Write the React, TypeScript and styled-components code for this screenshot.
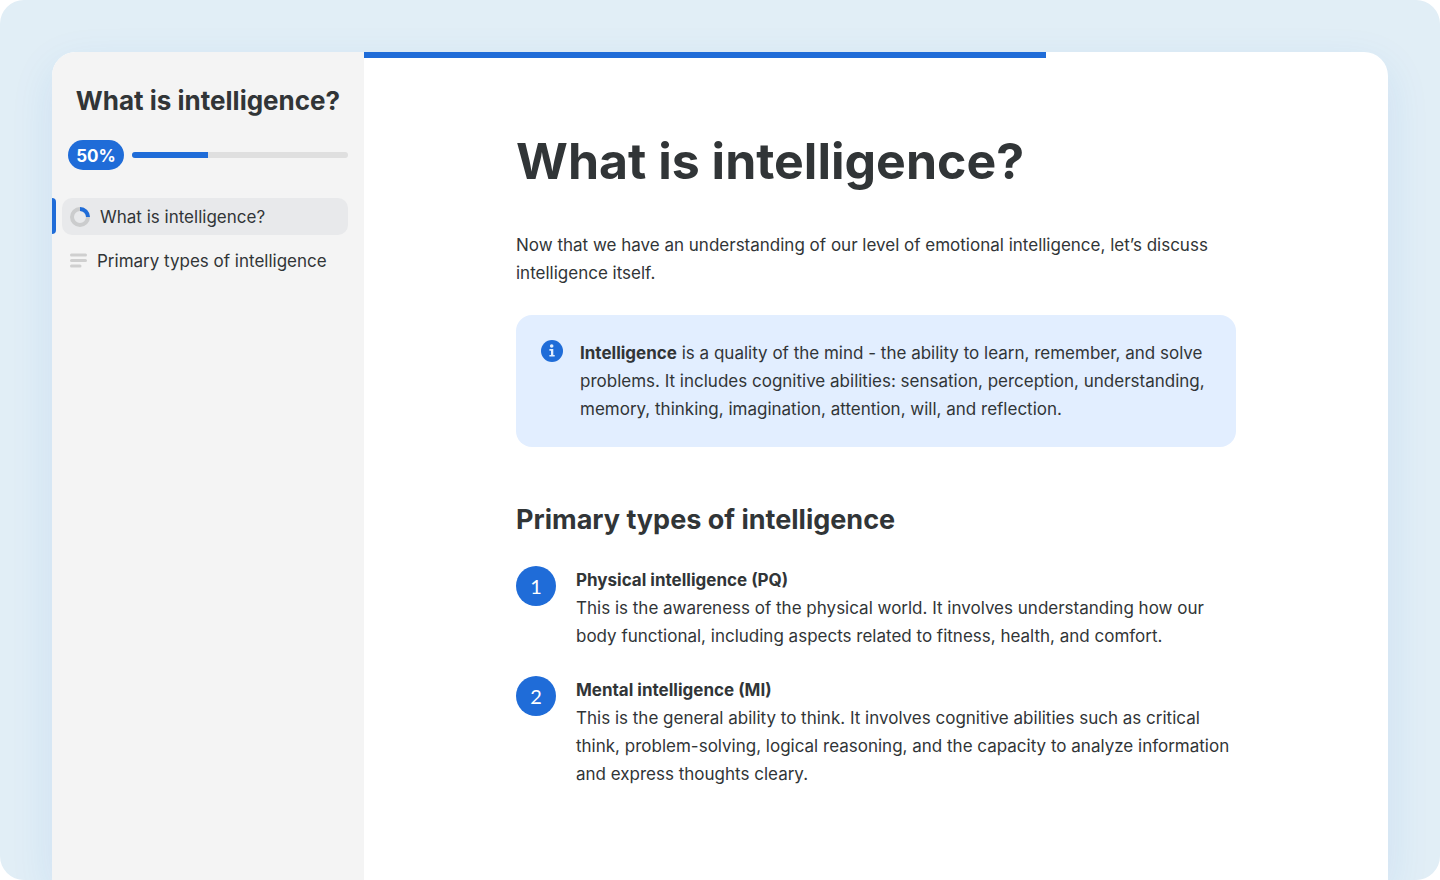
import React from "react";
import styled, { createGlobalStyle } from "styled-components";

const blue = "#1f6cd8";
const ink = "#313537";

const GlobalStyle = createGlobalStyle`
  *, *::before, *::after { box-sizing: border-box; }
  body { margin: 0; background: #fff; color: ${ink}; font: 400 17px/28px Inter, sans-serif; }
  h1, h2, h3, p, ul, ol { margin: 0; padding: 0; }
  ul, ol { list-style: none; }
`;

const Page = styled.div`
  display: flex;
  min-height: 100vh;
  padding: 52px 52px 0;
  overflow: hidden;
  border-radius: 24px;
  background: #e1eef6;
`;

const Course = styled.div`
  display: flex;
  flex: 1;
  min-width: 0;
  border-radius: 24px 24px 0 0;
  background: #fff;
  box-shadow: 0 14px 44px rgba(31, 108, 216, 0.1);
`;

const Sidebar = styled.aside`
  flex: 0 0 312px;
  padding: 32px 16px;
  border-radius: 24px 0 0 0;
  background: #f4f4f4;
`;

const SidebarTitle = styled.h2`
  font-size: 26px;
  line-height: 34px;
  font-weight: 700;
  text-align: center;
  white-space: nowrap;
`;

const Progress = styled.div`
  display: flex;
  align-items: center;
  gap: 8px;
  margin-top: 22px;
`;

const Percent = styled.span`
  width: 56px;
  height: 30px;
  border-radius: 15px;
  background: ${blue};
  color: #fff;
  font-size: 17px;
  line-height: 32px;
  font-weight: 700;
  text-align: center;
`;

const Track = styled.div`
  flex: 1;
  height: 6px;
  overflow: hidden;
  border-radius: 3px;
  background: #dfdfdf;
`;

const Bar = styled.div`
  height: 100%;
  background: ${blue};
`;

const Lessons = styled.ul`
  display: flex;
  flex-direction: column;
  gap: 7px;
  margin: 28px 0 0 -16px;
`;

const Lesson = styled.li<{ $active?: boolean }>`
  display: flex;
  gap: 6px;

  &::before {
    content: "";
    width: 4px;
    height: 36px;
    border-radius: 0 4px 4px 0;
    background: ${(p) => (p.$active ? blue : "transparent")};
  }
`;

const LessonLink = styled.a<{ $active?: boolean }>`
  display: flex;
  flex: 1;
  align-items: center;
  gap: 10px;
  height: 37px;
  padding: 0 8px;
  border-radius: 10px;
  background: ${(p) => (p.$active ? "#e8e9eb" : "transparent")};
  color: inherit;
  text-decoration: none;
  white-space: nowrap;
`;

const Main = styled.main`
  flex: 1;
  min-width: 0;
`;

const ReadingTrack = styled.div`
  height: 6px;
`;

const Article = styled.article`
  max-width: 752px;
  margin: 0 auto;
  padding: 70px 16px 64px;
`;

const Title = styled.h1`
  font-size: 50px;
  line-height: 66px;
  font-weight: 700;
`;

const Intro = styled.p`
  margin-top: 37px;
`;

const Callout = styled.section`
  display: flex;
  gap: 16px;
  margin-top: 28px;
  padding: 24px;
  border-radius: 16px;
  background: #e2eeff;

  svg { flex: none; }
`;

const Subtitle = styled.h2`
  margin-top: 55px;
  font-size: 27px;
  line-height: 36px;
  font-weight: 700;
`;

const Types = styled.ol`
  display: flex;
  flex-direction: column;
  gap: 26px;
  margin-top: 28px;
`;

const TypeItem = styled.li`
  display: flex;
  gap: 20px;
`;

const NumberBadge = styled.span`
  flex: none;
  width: 40px;
  height: 40px;
  border-radius: 50%;
  background: ${blue};
  color: #fff;
  font: 400 20px/40px Lato, sans-serif;
  text-align: center;
`;

const TypeName = styled.h3`
  font-size: 17px;
  line-height: 28px;
  font-weight: 700;
`;

const RingIcon = () => (
  <svg width="20" height="20" viewBox="0 0 20 20" fill="none" strokeWidth="4" aria-hidden="true">
    <circle cx="10" cy="10" r="8" stroke="#cbcccd" />
    <path d="M10 2a8 8 0 0 1 8 8" stroke={blue} />
  </svg>
);

const LinesIcon = () => (
  <svg width="17" height="16" viewBox="0 0 17 16" fill="#cfcfcf" aria-hidden="true">
    <rect y="0.5" width="17" height="3" rx="1.5" />
    <rect y="6" width="17" height="3" rx="1.5" />
    <rect y="11.5" width="11.5" height="3" rx="1.5" />
  </svg>
);

const InfoIcon = () => (
  <svg width="24" height="24" viewBox="0 0 24 24" aria-hidden="true">
    <circle cx="12" cy="12" r="11" fill={blue} />
    <circle cx="11.7" cy="7" r="1.8" fill="#e2eeff" />
    <path d="M9.4 10h3.9v5.9h1.4v1.7H9.4v-1.7h1.6v-4.1H9.4z" fill="#e2eeff" />
  </svg>
);

const types = [
  {
    name: "Physical intelligence (PQ)",
    text: "This is the awareness of the physical world. It involves understanding how our body functional, including aspects related to fitness, health, and comfort.",
  },
  {
    name: "Mental intelligence (MI)",
    text: "This is the general ability to think. It involves cognitive abilities such as critical think, problem-solving, logical reasoning, and the capacity to analyze information and express thoughts cleary.",
  },
];

export default function App() {
  return (
    <Page>
      <GlobalStyle />
      <Course>
        <Sidebar>
          <SidebarTitle>What is intelligence?</SidebarTitle>
          <Progress>
            <Percent>50%</Percent>
            <Track><Bar style={{ width: "35%" }} /></Track>
          </Progress>
          <nav aria-label="Lessons">
            <Lessons>
              <Lesson $active>
                <LessonLink href="#intelligence" $active aria-current="page"><RingIcon />What is intelligence?</LessonLink>
              </Lesson>
              <Lesson>
                <LessonLink href="#types"><LinesIcon />Primary types of intelligence</LessonLink>
              </Lesson>
            </Lessons>
          </nav>
        </Sidebar>
        <Main>
          <ReadingTrack><Bar style={{ width: "66.6%" }} /></ReadingTrack>
          <Article>
            <Title id="intelligence">What is intelligence?</Title>
            <Intro>Now that we have an understanding of our level of emotional intelligence, let’s discuss intelligence itself.</Intro>
            <Callout>
              <InfoIcon />
              <p><b>Intelligence</b> is a quality of the mind - the ability to learn, remember, and solve problems. It includes cognitive abilities: sensation, perception, understanding, memory, thinking, imagination, attention, will, and reflection.</p>
            </Callout>
            <Subtitle id="types">Primary types of intelligence</Subtitle>
            <Types>
              {types.map((type, i) => (
                <TypeItem key={type.name}>
                  <NumberBadge>{i + 1}</NumberBadge>
                  <div>
                    <TypeName>{type.name}</TypeName>
                    <p>{type.text}</p>
                  </div>
                </TypeItem>
              ))}
            </Types>
          </Article>
        </Main>
      </Course>
    </Page>
  );
}
